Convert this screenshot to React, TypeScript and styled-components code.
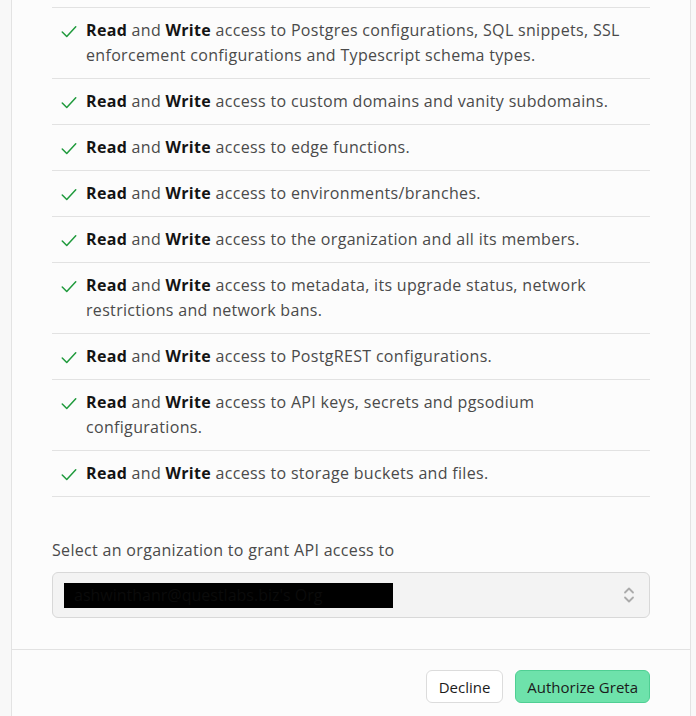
import React from "react";
import styled, { createGlobalStyle } from "styled-components";

const GlobalStyle = createGlobalStyle`
  html, body {
    margin: 0;
    padding: 0;
    background: #f8f8f8;
  }
  body {
    font-family: "Open Sans", "Noto Sans", Arial, sans-serif;
    -webkit-font-smoothing: antialiased;
  }
`;

const Card = styled.div`
  margin-left: 11px;
  width: 678px;
  min-height: 716px;
  background: #fcfcfc;
  border-left: 1px solid #e3e3e3;
  border-right: 1px solid #e3e3e3;
  box-sizing: content-box;
`;

const Body = styled.div`
  padding: 7px 40px 31px;
`;

const ScopeList = styled.ul`
  list-style: none;
  margin: 0;
  padding: 0;
`;

const ScopeRow = styled.li`
  display: flex;
  align-items: flex-start;
  gap: 8px;
  padding: 10px 0 10px 8px;
  border-top: 1px solid #e2e2e2;
  &:last-child {
    border-bottom: 1px solid #e2e2e2;
  }
`;

const CheckWrap = styled.span`
  flex: none;
  height: 25px;
  box-sizing: border-box;
  padding-top: 2px;
  display: flex;
  align-items: center;
`;

const ScopeText = styled.p`
  margin: 0;
  font-size: 16px;
  line-height: 25px;
  color: #4a4a4a;
  letter-spacing: 0.32px;
  b {
    color: #141414;
    font-weight: 700;
  }
`;

const FieldLabel = styled.label`
  display: block;
  margin-top: 41px;
  font-size: 16px;
  line-height: 24px;
  color: #4a4a4a;
  letter-spacing: 0.32px;
`;

const Select = styled.div`
  margin-top: 10px;
  height: 44px;
  border: 1px solid #d8d8d8;
  border-radius: 6px;
  background: #f3f3f3;
  display: flex;
  align-items: center;
  justify-content: space-between;
  padding: 0 14px 0 11px;
`;

const Redacted = styled.span`
  display: inline-block;
  background: #000;
  color: #0b0b0b;
  font-size: 16px;
  line-height: 25px;
  width: 329px;
  padding-left: 10px;
  box-sizing: border-box;
  white-space: nowrap;
  overflow: hidden;
`;

const Footer = styled.div`
  border-top: 1px solid #e2e2e2;
  display: flex;
  justify-content: flex-end;
  gap: 12px;
  padding: 20px 40px;
`;

const Button = styled.button<{ $primary?: boolean }>`
  height: 33px;
  padding: 0 ${(p) => (p.$primary ? "11px" : "12px")};
  border-radius: 6px;
  font-family: inherit;
  font-size: 15px;
  color: #1c1c1c;
  cursor: pointer;
  border: 1px solid ${(p) => (p.$primary ? "#4fcf93" : "#dcdcdc")};
  background: ${(p) => (p.$primary ? "#6ee2ab" : "#ffffff")};
`;

const Check = () => (
  <svg width="18" height="18" viewBox="0 0 24 24" fill="none" stroke="#1f9a3c" strokeWidth="2" strokeLinecap="round" strokeLinejoin="round">
    <path d="M21 5 9 18l-6-6" />
  </svg>
);

const Chevrons = () => (
  <svg width="12" height="20" viewBox="0 0 12 20" fill="none" stroke="#ababab" strokeWidth="1.8" strokeLinecap="round" strokeLinejoin="round">
    <path d="M2 7.5 6 3.5l4 4" />
    <path d="M2 12.5l4 4 4-4" />
  </svg>
);

const scopes = [
  "Postgres configurations, SQL snippets, SSL enforcement configurations and Typescript schema types.",
  "custom domains and vanity subdomains.",
  "edge functions.",
  "environments/branches.",
  "the organization and all its members.",
  "metadata, its upgrade status, network restrictions and network bans.",
  "PostgREST configurations.",
  "API keys, secrets and pgsodium configurations.",
  "storage buckets and files.",
];

export default function App() {
  return (
    <>
      <GlobalStyle />
      <Card>
        <Body>
          <ScopeList>
            {scopes.map((s) => (
              <ScopeRow key={s}>
                <CheckWrap>
                  <Check />
                </CheckWrap>
                <ScopeText>
                  <b>Read</b> and <b>Write</b> access to {s}
                </ScopeText>
              </ScopeRow>
            ))}
          </ScopeList>
          <FieldLabel>Select an organization to grant API access to</FieldLabel>
          <Select>
            <Redacted>ashwinthanr@questlabs.biz's Org</Redacted>
            <Chevrons />
          </Select>
        </Body>
        <Footer>
          <Button>Decline</Button>
          <Button $primary>Authorize Greta</Button>
        </Footer>
      </Card>
    </>
  );
}
